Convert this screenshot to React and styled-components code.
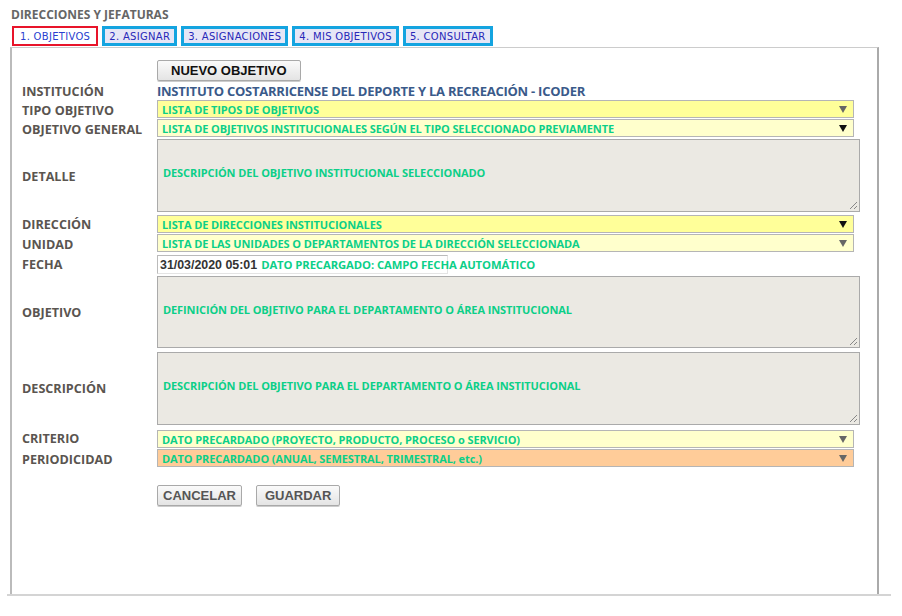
import styled, { createGlobalStyle } from 'styled-components';

const GlobalStyle = createGlobalStyle`
  html, body {
    margin: 0;
    padding: 0;
    background: #fff;
  }
  body {
    font-family: "Open Sans", "Liberation Sans", sans-serif;
  }
`;

const Page = styled.div`
  width: 902px;
  height: 616px;
  padding: 7px 0 0 10px;
  box-sizing: border-box;
`;

const Title = styled.div`
  font-size: 12px;
  font-weight: 700;
  color: #666;
  height: 19px;
  line-height: 15px;
  padding-left: 1px;
`;

const Tabs = styled.div`
  display: flex;
  gap: 4px;
  padding-left: 2px;
  height: 20px;
  margin-bottom: 1px;
`;

const Tab = styled.div`
  box-sizing: border-box;
  height: 20px;
  padding: 0 ${(p) => (p.active ? 6 : 4)}px;
  display: flex;
  align-items: center;
  font-family: "DejaVu Sans", Verdana, sans-serif;
  font-size: 10px;
  letter-spacing: 0.3px;
  color: ${(p) => (p.active ? '#2a3fd0' : '#2828b8')};
  background: ${(p) => (p.active ? '#fff' : '#e6e6f6')};
  border: ${(p) => (p.active ? '2px solid #e8142a' : '3px solid #14a4e0')};
`;

const Panel = styled.div`
  width: 869px;
  height: 548px;
  box-sizing: border-box;
  border-left: 2px solid #bbb;
  border-right: 2px solid #aaa;
  border-top: 1px solid #ccc;
  padding: 12px 0 0 10px;
  position: relative;
  &::after {
    content: '';
    position: absolute;
    left: -5px;
    right: -14px;
    bottom: -1px;
    height: 2px;
    background: #d4d4d4;
  }
`;

const Form = styled.div`
  display: grid;
  grid-template-columns: 135px 703px;
  row-gap: 1px;
  align-items: center;
`;

const Label = styled.div`
  font-size: 12.6px;
  font-weight: 700;
  color: #5a5550;
  white-space: nowrap;
  line-height: 15px;
  padding-top: 2px;
`;

const Cell = styled.div`
  display: flex;
  align-items: center;
  min-height: ${(p) => p.h || 17}px;
  margin-top: ${(p) => p.mt || 0}px;
`;

const FormButton = styled.button`
  font-family: "Liberation Sans", Arial, sans-serif;
  font-weight: 700;
  font-size: 13px;
  color: ${(p) => p.color || '#111'};
  height: 21px;
  padding: 0 ${(p) => p.px || 14}px;
  background: linear-gradient(#fafafa, #e4e4e4);
  border: 1px solid #a9a9a9;
  border-radius: 2px;
  box-shadow: 0 1px 0 #ccc;
`;

const Institution = styled.div`
  font-size: 13px;
  font-weight: 700;
  color: #3a5a8a;
  letter-spacing: -0.25px;
  line-height: 16px;
`;

const Select = styled.div`
  box-sizing: border-box;
  width: 697px;
  height: 18px;
  display: flex;
  align-items: center;
  justify-content: space-between;
  padding: 0 6px 0 4px;
  background: ${(p) => p.bg};
  border: 1px solid #b5b5b5;
  font-size: 11px;
  font-weight: 700;
  color: #0ccf88;
  letter-spacing: -0.1px;
`;

const Arrow = styled.span`
  width: 0;
  height: 0;
  border-left: 4px solid transparent;
  border-right: 4px solid transparent;
  border-top: 7px solid ${(p) => (p.dark ? '#111' : '#666')};
`;

const TextArea = styled.div`
  box-sizing: border-box;
  width: 703px;
  height: ${(p) => p.h || 73}px;
  background: #ebe9e3;
  border: 1px solid #aaa;
  display: flex;
  align-items: center;
  padding: 0 5px 6px;
  font-size: 11px;
  font-weight: 700;
  color: #0ccf88;
  letter-spacing: -0.1px;
  position: relative;
`;

const Grip = styled.svg`
  position: absolute;
  right: 1px;
  bottom: 1px;
`;

const DateBox = styled.div`
  box-sizing: border-box;
  width: 291px;
  height: 19px;
  border: 1px solid #bbb;
  border-right-color: #e4e4e4;
  border-bottom-color: #e4e4e4;
  display: flex;
  align-items: center;
  padding-left: 2px;
  white-space: nowrap;
`;

const DateValue = styled.span`
  font-family: "Liberation Sans", Arial, sans-serif;
  font-weight: 700;
  font-size: 12.4px;
  color: #333;
  margin-right: 4px;
`;

const Hint = styled.span`
  font-size: 11.3px;
  font-weight: 700;
  color: #0ccf88;
  letter-spacing: -0.1px;
`;

const Actions = styled.div`
  display: flex;
  gap: 14px;
`;

const Dropdown = ({ bg, dark, children }) => (
  <Select bg={bg}>
    <span>{children}</span>
    <Arrow dark={dark} />
  </Select>
);

const Area = ({ h, children }) => (
  <TextArea h={h}>
    {children}
    <Grip width="11" height="11" viewBox="0 0 11 11">
      <path d="M10 3 L3 10 M10 7 L7 10" stroke="#888" strokeWidth="1" />
    </Grip>
  </TextArea>
);

export default function App() {
  return (
    <Page>
      <GlobalStyle />
      <Title>DIRECCIONES Y JEFATURAS</Title>
      <Tabs>
        <Tab active>1. OBJETIVOS</Tab>
        <Tab>2. ASIGNAR</Tab>
        <Tab>3. ASIGNACIONES</Tab>
        <Tab>4. MIS OBJETIVOS</Tab>
        <Tab>5. CONSULTAR</Tab>
      </Tabs>
      <Panel>
        <Form>
          <span />
          <Cell h={21}>
            <FormButton px={13}>NUEVO OBJETIVO</FormButton>
          </Cell>
          <Label>INSTITUCIÓN</Label>
          <Cell>
            <Institution>INSTITUTO COSTARRICENSE DEL DEPORTE Y LA RECREACIÓN - ICODER</Institution>
          </Cell>
          <Label>TIPO OBJETIVO</Label>
          <Cell><Dropdown bg="#ffff99">LISTA DE TIPOS DE OBJETIVOS</Dropdown></Cell>
          <Label>OBJETIVO GENERAL</Label>
          <Cell><Dropdown bg="#ffffcc" dark>LISTA DE OBJETIVOS INSTITUCIONALES SEGÚN EL TIPO SELECCIONADO PREVIAMENTE</Dropdown></Cell>
          <Label>DETALLE</Label>
          <Cell mt={1}><Area>DESCRIPCIÓN DEL OBJETIVO INSTITUCIONAL SELECCIONADO</Area></Cell>
          <Label>DIRECCIÓN</Label>
          <Cell mt={2}><Dropdown bg="#ffff99" dark>LISTA DE DIRECCIONES INSTITUCIONALES</Dropdown></Cell>
          <Label>UNIDAD</Label>
          <Cell><Dropdown bg="#ffffcc">LISTA DE LAS UNIDADES O DEPARTAMENTOS DE LA DIRECCIÓN SELECCIONADA</Dropdown></Cell>
          <Label>FECHA</Label>
          <Cell mt={2}>
            <DateBox>
              <DateValue>31/03/2020 05:01</DateValue>
              <Hint>DATO PRECARGADO: CAMPO FECHA AUTOMÁTICO</Hint>
            </DateBox>
          </Cell>
          <Label>OBJETIVO</Label>
          <Cell mt={1}><Area h={72}>DEFINICIÓN DEL OBJETIVO PARA EL DEPARTAMENTO O ÁREA INSTITUCIONAL</Area></Cell>
          <Label>DESCRIPCIÓN</Label>
          <Cell mt={3}><Area>DESCRIPCIÓN DEL OBJETIVO PARA EL DEPARTAMENTO O ÁREA INSTITUCIONAL</Area></Cell>
          <Label>CRITERIO</Label>
          <Cell mt={4}><Dropdown bg="#ffffcc">DATO PRECARDADO (PROYECTO, PRODUCTO, PROCESO o SERVICIO)</Dropdown></Cell>
          <Label>PERIODICIDAD</Label>
          <Cell><Dropdown bg="#ffcc99">DATO PRECARDADO (ANUAL, SEMESTRAL, TRIMESTRAL, etc.)</Dropdown></Cell>
          <span />
          <Cell mt={17}>
            <Actions>
              <FormButton color="#555" px={5}>CANCELAR</FormButton>
              <FormButton color="#555" px={8}>GUARDAR</FormButton>
            </Actions>
          </Cell>
        </Form>
      </Panel>
    </Page>
  );
}
